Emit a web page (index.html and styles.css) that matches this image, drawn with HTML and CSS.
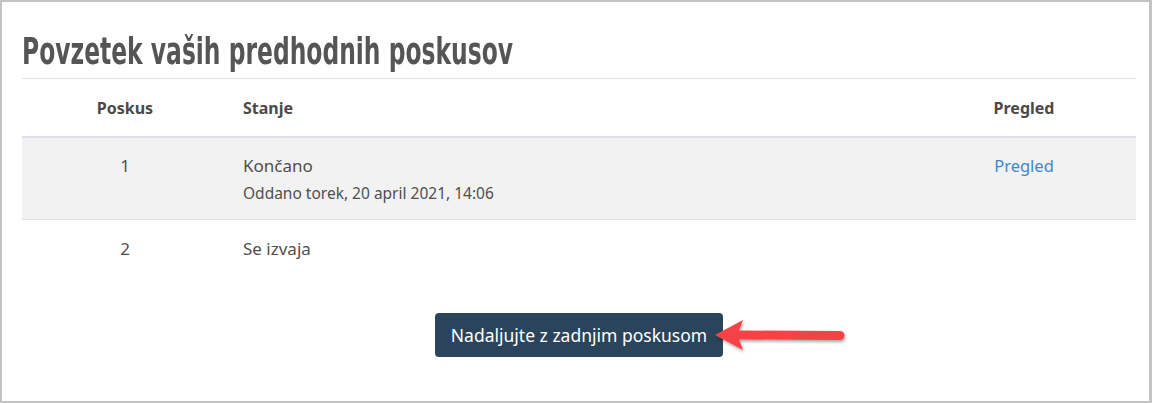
FILE: index.html
```html
<!DOCTYPE html>
<html lang="sl">
<head>
<meta charset="UTF-8">
<title>Povzetek poskusov</title>
<link rel="stylesheet" href="styles.css">
</head>
<body>

<div class="frame">
    <h2 class="title"><span>Povzetek vaših predhodnih poskusov</span></h2>

    <table class="attempts">
        <thead>
            <tr>
                <th class="c-num">Poskus</th>
                <th class="c-state">Stanje</th>
                <th class="c-review">Pregled</th>
            </tr>
        </thead>
        <tbody>
            <tr class="odd">
                <td class="c-num">1</td>
                <td class="c-state">Končano<br><span class="sub">Oddano torek, 20 april 2021, 14:06</span></td>
                <td class="c-review"><a href="#">Pregled</a></td>
            </tr>
            <tr class="last">
                <td class="c-num">2</td>
                <td class="c-state">Se izvaja</td>
                <td class="c-review"></td>
            </tr>
        </tbody>
    </table>

    <div class="actions">
        <div class="btn-wrap">
            <button class="btn">Nadaljujte z zadnjim poskusom</button>
            <!-- annotation arrow pointing at the button -->
            <svg class="arrow" width="140" height="44" viewBox="0 0 140 44">
                <defs>
                    <filter id="sh" x="-20%" y="-40%" width="140%" height="180%">
                        <feDropShadow dx="1" dy="2" stdDeviation="1.6" flood-color="#000" flood-opacity="0.35"/>
                    </filter>
                </defs>
                <g filter="url(#sh)" fill="#f54346">
                    <path d="M4 21 L32 6 L28 16.5 L129 17 A4.5 4.5 0 0 1 129 26 L28 25.5 L32 36 Z"/>
                </g>
            </svg>
        </div>
    </div>
</div>

</body>
</html>
```

FILE: styles.css
```css
/* page frame */
html, body {
    margin: 0;
    padding: 0;
    background: #fff;
}

.frame {
    box-sizing: border-box;
    width: 1152px;
    height: 403px;
    border: 2px solid #c3c3c3;
    border-right-width: 3px;
    padding: 0 13px 0 20px;
    font-family: "Noto Sans", "Open Sans", sans-serif;
    color: #4f4f4f;
}

.title {
    margin: 0;
    padding: 30px 0 8px 0;
    font-family: "DejaVu Sans Condensed", sans-serif;
    font-weight: bold;
    font-size: 38px;
    line-height: 38px;
    color: #555;
    border-bottom: 1px solid #e1e1e1;
    white-space: nowrap;
}

/* the original heading face is far narrower than anything installed */
.title span {
    display: inline-block;
    transform: scaleX(0.685);
    transform-origin: left center;
}

/* table */
.attempts {
    width: 100%;
    border-collapse: collapse;
    font-size: 17px;
}

.attempts th {
    height: 57px;
    font-size: 16px;
    font-weight: bold;
    color: #4a4a4a;
    border-bottom: 2px solid #dee2e6;
    padding: 0 15px;
}

.attempts td {
    padding: 0 15px;
    vertical-align: top;
}

.c-num { width: 176px; text-align: center; }
.c-state { text-align: left; }
.c-review { width: 194px; text-align: center; }

.attempts tr.odd td {
    background: #f2f2f2;
    height: 82px;
    padding-top: 17px;
    box-sizing: border-box;
    border-bottom: 1px solid #e1e1e1;
    line-height: 22px;
}

.attempts tr.odd td.c-review {
    font-size: 16.5px;
}

.attempts tr.last td {
    padding-top: 17px;
}

.sub {
    display: inline-block;
    margin-top: 5px;
    font-size: 15.5px;
}

.attempts a {
    color: #3d8ac9;
    text-decoration: none;
}

/* continue button */
.actions {
    display: flex;
    justify-content: center;
    margin-top: 53px;
}

.btn-wrap {
    position: relative;
}

.btn {
    display: block;
    background: #2a455b;
    color: #fff;
    border: 0;
    border-radius: 4px;
    height: 44px;
    padding: 0 16px;
    font-family: "Noto Sans", "Open Sans", sans-serif;
    font-size: 17.5px;
}

.arrow {
    position: absolute;
    left: calc(100% - 12px);
    top: 1px;
}
```
